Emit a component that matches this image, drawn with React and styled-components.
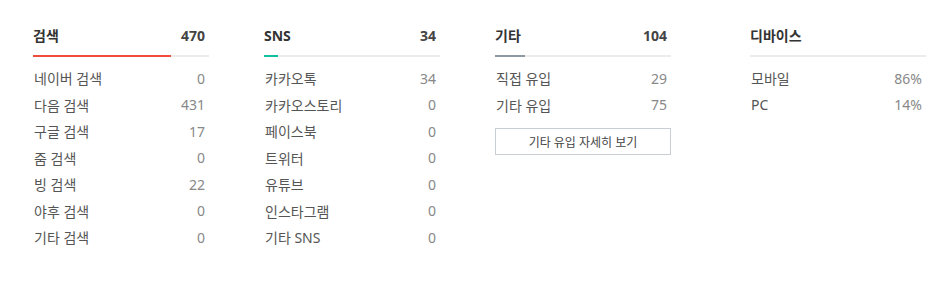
import React from 'react';
import styled, { createGlobalStyle } from 'styled-components';

const GlobalStyle = createGlobalStyle`
  body {
    margin: 0;
    background: #fff;
    font-family: "Noto Sans", "Noto Sans CJK KR", sans-serif;
  }
`;

const Board = styled.div`
  display: flex;
  align-items: flex-start;
  gap: 55px;
  padding: 24px 0 0 33px;
`;

const Column = styled.section`
  width: 176px;
  margin-left: ${({ offset }) => offset || 0}px;
`;

const Head = styled.div`
  display: flex;
  justify-content: space-between;
  align-items: center;
  height: 22px;
  padding-right: 4px;
  font-size: 14px;
  font-weight: 700;
  color: #333;
`;

const HeadCount = styled.span`
  color: #444;
`;

const Track = styled.div`
  position: relative;
  height: 2px;
  margin-top: 9px;
  background: #ececec;
`;

const Fill = styled.div`
  position: absolute;
  left: 0;
  top: 0;
  height: 100%;
  background: ${({ color }) => color};
`;

const List = styled.ul`
  list-style: none;
  margin: 8px 0 0;
  padding: 0;
`;

const Row = styled.li`
  display: flex;
  justify-content: space-between;
  align-items: center;
  height: 26.5px;
  padding: 0 4px 0 1px;
  font-size: 14px;
  color: #555;
`;

const Value = styled.span`
  color: #888;
`;

const DetailButton = styled.button`
  display: block;
  width: 100%;
  height: 27px;
  margin-top: 10px;
  border: 1px solid #c9ced6;
  background: #fff;
  font-family: inherit;
  font-size: 12px;
  color: #444;
  cursor: pointer;
`;

const groups = [
  {
    title: '검색',
    total: '470',
    color: '#f24c3d',
    share: 78.5,
    rows: [
      ['네이버 검색', '0'],
      ['다음 검색', '431'],
      ['구글 검색', '17'],
      ['줌 검색', '0'],
      ['빙 검색', '22'],
      ['야후 검색', '0'],
      ['기타 검색', '0'],
    ],
  },
  {
    title: 'SNS',
    total: '34',
    color: '#10c0a0',
    share: 8,
    rows: [
      ['카카오톡', '34'],
      ['카카오스토리', '0'],
      ['페이스북', '0'],
      ['트위터', '0'],
      ['유튜브', '0'],
      ['인스타그램', '0'],
      ['기타 SNS', '0'],
    ],
  },
  {
    title: '기타',
    total: '104',
    color: '#8e99a4',
    share: 17,
    rows: [
      ['직접 유입', '29'],
      ['기타 유입', '75'],
    ],
    button: '기타 유입 자세히 보기',
  },
  {
    title: '디바이스',
    total: '',
    color: 'transparent',
    share: 0,
    offset: 24,
    rows: [
      ['모바일', '86%'],
      ['PC', '14%'],
    ],
  },
];

export default function App() {
  return (
    <>
      <GlobalStyle />
      <Board>
        {groups.map((g) => (
          <Column key={g.title} offset={g.offset}>
            <Head>
              <span>{g.title}</span>
              <HeadCount>{g.total}</HeadCount>
            </Head>
            <Track>
              <Fill color={g.color} style={{ width: `${g.share}%` }} />
            </Track>
            <List>
              {g.rows.map(([label, value]) => (
                <Row key={label}>
                  <span>{label}</span>
                  <Value>{value}</Value>
                </Row>
              ))}
            </List>
            {g.button && <DetailButton>{g.button}</DetailButton>}
          </Column>
        ))}
      </Board>
    </>
  );
}
